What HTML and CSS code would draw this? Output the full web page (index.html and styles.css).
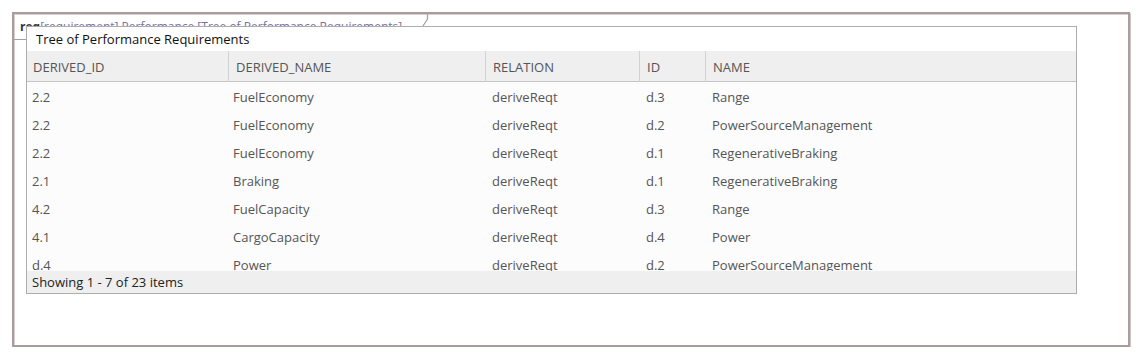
FILE: index.html
```html
<!DOCTYPE html>
<html lang="en">
<head>
  <meta charset="UTF-8" />
  <title>Tree of Performance Requirements</title>
  <link rel="stylesheet" href="styles.css">
</head>
<body>
  <div class="frame">
    <div class="tab">
      <span class="tab-text"><b>req</b>[requirement] Performance [Tree of Performance Requirements]</span>
      <svg class="notch" width="10" height="14" viewBox="0 0 10 14">
        <path d="M6.5 0 V5 L2 12" fill="none" stroke="#a89c9c" stroke-width="1.2"/>
      </svg>
    </div>

    <div class="panel">
      <div class="panel-title">Tree of Performance Requirements</div>
      <div class="grid head">
        <div class="cell">DERIVED_ID</div>
        <div class="cell">DERIVED_NAME</div>
        <div class="cell">RELATION</div>
        <div class="cell">ID</div>
        <div class="cell">NAME</div>
      </div>
      <div class="rows">
        <div class="grid row"><div>2.2</div><div>FuelEconomy</div><div>deriveReqt</div><div>d.3</div><div>Range</div></div>
        <div class="grid row"><div>2.2</div><div>FuelEconomy</div><div>deriveReqt</div><div>d.2</div><div>PowerSourceManagement</div></div>
        <div class="grid row"><div>2.2</div><div>FuelEconomy</div><div>deriveReqt</div><div>d.1</div><div>RegenerativeBraking</div></div>
        <div class="grid row"><div>2.1</div><div>Braking</div><div>deriveReqt</div><div>d.1</div><div>RegenerativeBraking</div></div>
        <div class="grid row"><div>4.2</div><div>FuelCapacity</div><div>deriveReqt</div><div>d.3</div><div>Range</div></div>
        <div class="grid row"><div>4.1</div><div>CargoCapacity</div><div>deriveReqt</div><div>d.4</div><div>Power</div></div>
        <div class="grid row"><div>d.4</div><div>Power</div><div>deriveReqt</div><div>d.2</div><div>PowerSourceManagement</div></div>
      </div>
      <div class="footer">Showing 1 - 7 of 23 items</div>
    </div>
  </div>
</body>
</html>
```

FILE: styles.css
```css
* { box-sizing: border-box; margin: 0; padding: 0; }
body { background: #fff; font-family: 'Open Sans', 'Noto Sans', sans-serif; font-size: 13px; color: #555; }

.frame {
  margin: 12px 0 0 12px;
  width: 1118px;
  height: 335px;
  border: 2px solid #a89c9c;
  box-shadow: inset 1px 1px 0 #d8d0d0, 1px 1px 0 #cfc8c8;
  padding: 0 0 0 12px;
}

.tab {
  display: flex;
  align-items: flex-start;
  width: 410px;
  height: 26px;
  margin-left: -12px;
  border-bottom: 1px solid #a89c9c;
}
.tab-text {
  padding: 5px 0 0 6px;
  font-size: 12px;
  color: #7a6fa0;
  white-space: nowrap;
  line-height: 16px;
}
.tab-text b { color: #333; }
.notch { margin-left: auto; margin-right: -7px; }

.panel {
  position: relative;
  margin-top: -14px;
  width: 1051px;
  height: 268px;
  border: 1px solid #adadad;
  background: #fcfcfc;
  display: flex;
  flex-direction: column;
}

.panel-title {
  height: 24px;
  line-height: 24px;
  padding-left: 9px;
  background: #fff;
  color: #111;
}

.grid {
  display: grid;
  grid-template-columns: 201px 257px 154px 66px 1fr;
}

.head {
  height: 31px;
  background: #efefef;
  border-bottom: 1px solid #c4c4c4;
}
.head .cell {
  line-height: 30px;
  padding: 1px 0 0 7px;
  border-left: 1px solid #d2d2d2;
}
.head .cell:first-child { border-left: none; padding-left: 6px; }

.rows { flex: 1; overflow: hidden; }
.row { height: 28px; line-height: 28px; padding-top: 1px; }
.row div { padding-left: 5px; }
.row div:nth-child(n+3) { padding-left: 7px; }

.footer {
  height: 22px;
  line-height: 22px;
  padding-left: 5px;
  background: #efefef;
  color: #222;
}
```
